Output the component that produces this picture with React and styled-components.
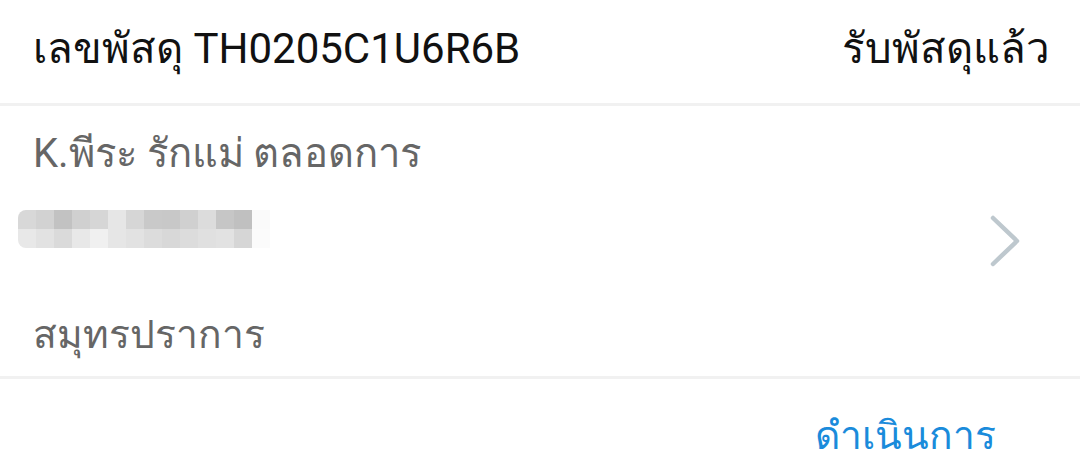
import React from 'react'
import styled, { createGlobalStyle } from 'styled-components'

const GlobalStyle = createGlobalStyle`
  html, body {
    margin: 0;
    padding: 0;
    background: #fff;
  }
  body {
    font-family: Roboto, "Noto Sans", sans-serif;
  }
`

const blurTop = ['#d8d8d8', '#d2d2d2', '#c2c2c2', '#d0d0d0', '#d6d6d6', '#e6e6e6', '#d6d6d6', '#c9c9c9', '#c8c8c8', '#d0d0d0', '#dcdcdc', '#c6c6c6', '#c0c0c0', '#fafafa']
const blurBottom = ['#e8e8e8', '#e2e2e2', '#dadada', '#e8e8e8', '#f0f0f0', '#e6e6e6', '#e2e2e2', '#dcdcdc', '#d8d8d8', '#dcdcdc', '#e0e0e0', '#e2e2e2', '#d6d6d6', '#fbfbfb']

export default function App() {
  return (
    <>
      <GlobalStyle />
      <Card>
        <Header>
          <span>เลขพัสดุ TH0205C1U6R6B</span>
          <span>รับพัสดุแล้ว</span>
        </Header>
        <Divider />
        <Body>
          <Info>
            <Line size={40}>K.พีระ รักแม่ ตลอดการ</Line>
            <Redacted>
              <BlurRow>
                {blurTop.map((c, i) => <Cell key={i} shade={c} />)}
              </BlurRow>
              <BlurRow>
                {blurBottom.map((c, i) => <Cell key={i} shade={c} />)}
              </BlurRow>
            </Redacted>
            <Line size={39}>สมุทรปราการ</Line>
          </Info>
          <Chevron viewBox='0 0 30 52'>
            <polyline points='3,3 27,26 3,49' />
          </Chevron>
        </Body>
        <Divider />
        <Footer>
          <Action>ดำเนินการ</Action>
        </Footer>
      </Card>
    </>
  )
}

const Card = styled.div`
  width: 1080px;
  height: 455px;
  overflow: hidden;
  background: #fff;
  display: flex;
  flex-direction: column;
`
const Header = styled.div`
  height: 103px;
  flex-shrink: 0;
  padding: 0 30px 8px 33px;
  display: flex;
  align-items: center;
  justify-content: space-between;
  color: #111;
  font-size: 42px;
  box-sizing: border-box;
`
const Divider = styled.div`
  height: 3px;
  background: #f1f1f1;
  flex-shrink: 0;
`
const Body = styled.div`
  height: 270px;
  flex-shrink: 0;
  display: flex;
  align-items: center;
  justify-content: space-between;
  padding: 0 60px 0 33px;
  box-sizing: border-box;
`
const Info = styled.div`
  display: flex;
  flex-direction: column;
  padding: 20px 0 13px;
`
const Line = styled.div`
  font-size: ${props => props.size}px;
  color: #666;
  line-height: 56px;
  height: 56px;
`
const Redacted = styled.div`
  margin: 28px 0 59px -15px;
  display: flex;
  flex-direction: column;
  border-radius: 8px 0 0 8px;
  overflow: hidden;
  width: fit-content;
`
const BlurRow = styled.div`
  display: flex;
`
const Cell = styled.div`
  width: 18px;
  height: 19px;
  background: ${props => props.shade};
`
const Chevron = styled.svg`
  width: 30px;
  height: 52px;
  fill: none;
  stroke: #bec8ce;
  stroke-width: 4.5;
  stroke-linecap: round;
  stroke-linejoin: round;
`
const Footer = styled.div`
  flex: 1;
  display: flex;
  justify-content: flex-end;
  padding: 32px 84px 0 0;
`
const Action = styled.span`
  font-size: 39px;
  line-height: 50px;
  color: #1a8bdb;
`
